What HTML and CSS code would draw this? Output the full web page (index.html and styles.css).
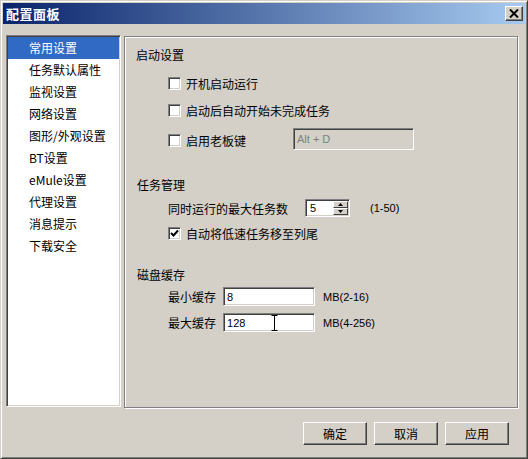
FILE: index.html
```html
<!DOCTYPE html>
<html lang="zh-CN">
<head>
  <meta charset="UTF-8" />
  <title>配置面板</title>
  <link rel="stylesheet" href="styles.css">
</head>
<body>

<div class="window">
  <div class="titlebar">
    <span class="title">配置面板</span>
    <span class="close-btn">
      <svg width="10" height="9" viewBox="0 0 10 9"><path d="M1 0.5 L9 8.5 M9 0.5 L1 8.5" stroke="#000" stroke-width="2"/></svg>
    </span>
  </div>

  <div class="body">
    <ul class="nav">
      <li class="active">常用设置</li>
      <li>任务默认属性</li>
      <li>监视设置</li>
      <li>网络设置</li>
      <li>图形/外观设置</li>
      <li>BT设置</li>
      <li>eMule设置</li>
      <li>代理设置</li>
      <li>消息提示</li>
      <li>下载安全</li>
    </ul>

    <div class="panel">
      <div class="group-title">启动设置</div>
      <label class="row r1"><span class="check"></span>开机启动运行</label>
      <label class="row r2"><span class="check"></span>启动后自动开始未完成任务</label>
      <div class="row r3">
        <label class="boss"><span class="check"></span>启用老板键</label>
        <span class="edit disabled hotkey">Alt + D</span>
      </div>

      <div class="group-title g2">任务管理</div>
      <div class="row r4">
        <span class="lbl-task">同时运行的最大任务数</span>
        <span class="spin">
          <span class="spin-val">5</span>
          <span class="spin-btns">
            <span class="spin-btn"><svg width="5" height="3" viewBox="0 0 5 3"><path d="M2.5 0 L5 3 L0 3 Z" fill="#000"/></svg></span>
            <span class="spin-btn"><svg width="5" height="3" viewBox="0 0 5 3"><path d="M0 0 L5 0 L2.5 3 Z" fill="#000"/></svg></span>
          </span>
        </span>
        <span class="hint range">(1-50)</span>
      </div>
      <label class="row r5">
        <span class="check on">
          <svg width="9" height="9" viewBox="0 0 9 9"><path d="M1 4 L3.5 6.5 L8 1.5" fill="none" stroke="#000" stroke-width="2"/></svg>
        </span>自动将低速任务移至列尾
      </label>

      <div class="group-title g3">磁盘缓存</div>
      <div class="row r6">
        <span class="lbl-cache">最小缓存</span>
        <span class="edit cache">8</span>
        <span class="hint">MB(2-16)</span>
      </div>
      <div class="row r7">
        <span class="lbl-cache">最大缓存</span>
        <span class="edit cache">128
          <svg class="ibeam" width="7" height="16" viewBox="0 0 7 16"><path d="M0.5 0.5 H6.5 M3.5 0.5 V15.5 M0.5 15.5 H6.5" stroke="#000" stroke-width="1" fill="none"/></svg>
        </span>
        <span class="hint">MB(4-256)</span>
      </div>
    </div>
  </div>

  <div class="footer">
    <button class="btn">确定</button>
    <button class="btn">取消</button>
    <button class="btn">应用</button>
  </div>
</div>

</body>
</html>
```

FILE: styles.css
```css
html, body {
  margin: 0;
  padding: 0;
}
body {
  width: 528px;
  height: 459px;
  overflow: hidden;
  font-family: "Liberation Sans", "Noto Sans CJK SC", sans-serif;
  font-size: 12px;
  color: #000;
  background: #d4d0c8;
}
.window {
  box-sizing: border-box;
  width: 528px;
  height: 459px;
  padding: 2px;
  border: 1px solid;
  border-color: #d4d0c8 #404040 #404040 #d4d0c8;
  box-shadow: inset 1px 1px #fff, inset -1px -1px #808080;
  background: #d4d0c8;
  display: flex;
  flex-direction: column;
}

/* title bar */
.titlebar {
  height: 21px;
  flex: none;
  display: flex;
  align-items: center;
  justify-content: space-between;
  padding: 0 2px 0 3px;
  background: linear-gradient(to right, #0a246a, #a6caf0);
}
.title {
  color: #fff;
  font-family: "Noto Sans CJK SC", sans-serif;
  font-weight: bold;
  font-size: 13px;
  letter-spacing: 0.5px;
}
.close-btn {
  width: 18px;
  height: 15px;
  box-sizing: border-box;
  display: flex;
  align-items: center;
  justify-content: center;
  background: #d4d0c8;
  border: 1px solid;
  border-color: #fff #404040 #404040 #fff;
  box-shadow: inset -1px -1px #808080;
}

/* main area */
.body {
  display: flex;
  margin-top: 11px;
  height: 373px;
  flex: none;
}
.nav {
  list-style: none;
  margin: 0 0 0 3px;
  padding: 0;
  width: 115px;
  height: 372px;
  box-sizing: border-box;
  background: #fff;
  border: 1px solid;
  border-color: #808080 #fff #fff #808080;
  box-shadow: inset 1px 1px #404040, inset -1px -1px #d4d0c8;
  padding: 1px;
}
.nav li {
  height: 22px;
  line-height: 22px;
  padding-left: 21px;
  font-family: "Noto Sans CJK SC", sans-serif;
  white-space: nowrap;
}
.nav li.active {
  background: #316ac5;
  color: #fff;
}

.panel {
  margin-left: 3px;
  margin-top: 1px;
  width: 394px;
  height: 372px;
  box-sizing: border-box;
  border: 1px solid #808080;
  box-shadow: inset 1px 1px #fff, 1px 1px #fff;
  padding: 10px 0 0 10px;
}
.group-title {
  height: 16px;
  line-height: 16px;
  font-family: "Noto Sans CJK SC", sans-serif;
  margin-left: 1px;
}
.group-title.g2 { margin-top: 27px; margin-left: 2px; }
.group-title.g3 { margin-top: 23px; margin-left: 2px; }

.row {
  display: flex;
  align-items: center;
  height: 22px;
  padding-left: 33px;
  font-family: "Noto Sans CJK SC", sans-serif;
  white-space: nowrap;
}
.row.r1 { margin-top: 9px; }
.row.r2 { margin-top: 5px; }
.row.r3 { margin-top: 7px; }
.row.r4 { margin-top: 6px; height: 18px; }
.row.r5 { margin-top: 5px; }
.row.r6 { margin-top: 4px; height: 19px; }
.row.r7 { margin-top: 7px; height: 19px; }

.boss {
  display: flex;
  align-items: center;
  width: 125px;
  padding-top: 3px;
}

.check {
  width: 13px;
  height: 13px;
  box-sizing: border-box;
  flex: none;
  margin-right: 5px;
  background: #fff;
  border: 1px solid;
  border-color: #808080 #fff #fff #808080;
  box-shadow: inset 1px 1px #404040, inset -1px -1px #d4d0c8;
  display: flex;
  align-items: center;
  justify-content: center;
}

.edit {
  box-sizing: border-box;
  display: flex;
  align-items: center;
  background: #fff;
  border: 1px solid;
  border-color: #808080 #fff #fff #808080;
  box-shadow: inset 1px 1px #404040, inset -1px -1px #d4d0c8;
  padding-left: 3px;
  font-family: "Liberation Sans", sans-serif;
  font-size: 11px;
}
.edit.disabled {
  background: #d4d0c8;
  color: #808080;
}
.hotkey {
  width: 121px;
  height: 22px;
}
.cache {
  position: relative;
  width: 92px;
  height: 19px;
  margin-left: 7px;
}
.ibeam {
  position: absolute;
  left: 47px;
  top: 1px;
}

.lbl-task { width: 137px; }
.spin {
  box-sizing: border-box;
  width: 45px;
  height: 18px;
  display: flex;
  background: #fff;
  border: 1px solid;
  border-color: #808080 #fff #fff #808080;
  box-shadow: inset 1px 1px #404040, inset -1px -1px #d4d0c8;
  padding: 1px;
}
.spin-val {
  flex: 1;
  padding-left: 3px;
  line-height: 14px;
  font-family: "Liberation Sans", sans-serif;
  font-size: 11px;
}
.spin-btns {
  width: 15px;
  display: flex;
  flex-direction: column;
}
.spin-btn {
  flex: 1;
  box-sizing: border-box;
  display: flex;
  align-items: center;
  justify-content: center;
  background: #d4d0c8;
  border: 1px solid;
  border-color: #fff #404040 #404040 #fff;
}

.hint {
  margin-left: 8px;
  font-family: "Liberation Sans", sans-serif;
  font-size: 11px;
}
.hint.range { margin-left: 20px; }

/* buttons */
.footer {
  display: flex;
  justify-content: flex-end;
  gap: 7px;
  padding: 14px 16px 0 0;
}
.btn {
  width: 64px;
  height: 23px;
  box-sizing: border-box;
  margin: 0;
  padding: 0;
  background: #d4d0c8;
  border: 1px solid;
  border-color: #fff #404040 #404040 #fff;
  box-shadow: inset -1px -1px #808080;
  font-family: "Noto Sans CJK SC", sans-serif;
  font-size: 12px;
  color: #000;
}
```
